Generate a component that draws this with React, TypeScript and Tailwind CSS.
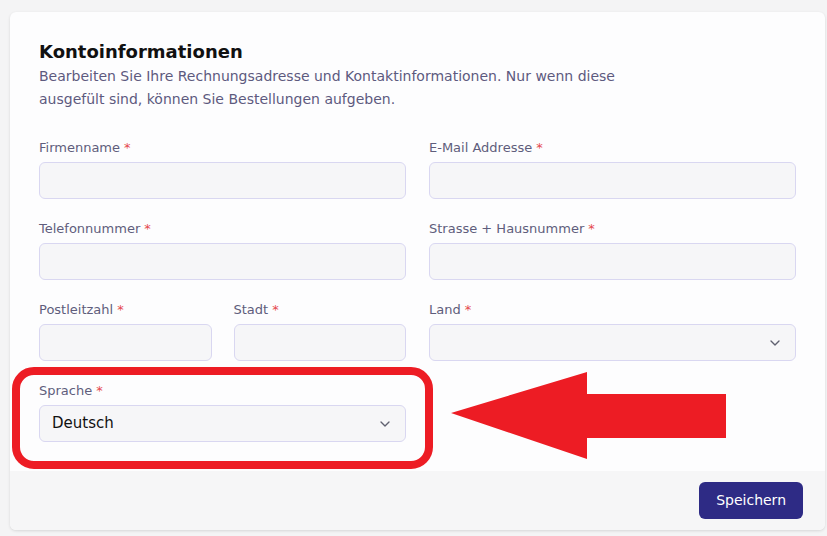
import { ChevronDown } from "lucide-react";

const font = { fontFamily: '"DejaVu Sans", "Noto Sans", sans-serif' };

function Label({ text }: { text: string }) {
  return (
    <label className="block text-[13px] leading-5 text-[#5f5d7c]">
      {text}
      <span className="ml-1 text-[#e5484d]">*</span>
    </label>
  );
}

function Field({ label }: { label: string }) {
  return (
    <div className="flex flex-col gap-[4px]">
      <Label text={label} />
      <input className="h-[37px] w-full rounded-md border border-[#d9d7f1] bg-[#f6f6f8] px-3 text-sm outline-none" />
    </div>
  );
}

function SelectField({ label, value }: { label: string; value?: string }) {
  return (
    <div className="flex flex-col gap-[4px]">
      <Label text={label} />
      <div className="flex h-[37px] w-full items-center justify-between rounded-md border border-[#d9d7f1] bg-[#f6f6f8] pl-3 pr-3">
        <span className="text-[15px] text-[#111]">{value}</span>
        <ChevronDown className="h-4 w-4 text-[#5f6070]" strokeWidth={2} />
      </div>
    </div>
  );
}

export default function App() {
  return (
    <div className="relative min-h-[536px] w-[827px] overflow-hidden bg-[#f4f4f5] pl-[10px] pt-[12px]" style={font}>
      <div className="w-[815px] overflow-hidden rounded-md bg-[#fdfdfe] shadow-[0_1px_3px_rgba(0,0,0,0.12)]">
        <div className="px-[29px] pb-[29px] pt-[27px]">
          <h2 className="text-[18px] font-bold leading-[25px] text-[#111]">Kontoinformationen</h2>
          <p className="mt-[1px] max-w-[610px] text-[14px] leading-[23px] text-[#5d5a7e]">
            Bearbeiten Sie Ihre Rechnungsadresse und Kontaktinformationen. Nur wenn diese ausgefült sind, können Sie Bestellungen aufgeben.
          </p>

          <div className="mt-[27px] grid grid-cols-2 gap-x-[23px] gap-y-[20px]">
            <Field label="Firmenname" />
            <Field label="E-Mail Addresse" />
            <Field label="Telefonnummer" />
            <Field label="Strasse + Hausnummer" />
            <div className="grid grid-cols-2 gap-x-[22px]">
              <Field label="Postleitzahl" />
              <Field label="Stadt" />
            </div>
            <SelectField label="Land" />
            <SelectField label="Sprache" value="Deutsch" />
          </div>
        </div>

        <div className="flex h-[59px] items-center justify-end bg-[#f6f6f7] pr-[22px]">
          <button className="h-[37px] rounded-md bg-[#2e2b85] px-[17px] text-[14px] font-medium text-white">
            Speichern
          </button>
        </div>
      </div>

      {/* annotation overlay */}
      <div className="pointer-events-none absolute left-[12px] top-[367px] h-[102px] w-[421px] rounded-[22px] border-[8px] border-[#ed1c24]" />
      <svg className="pointer-events-none absolute left-0 top-0" width="827" height="536">
        <polygon
          points="451,413 587,372 587,394 726,394 726,438 587,438 587,459"
          fill="#ed1c24"
        />
      </svg>
    </div>
  );
}
